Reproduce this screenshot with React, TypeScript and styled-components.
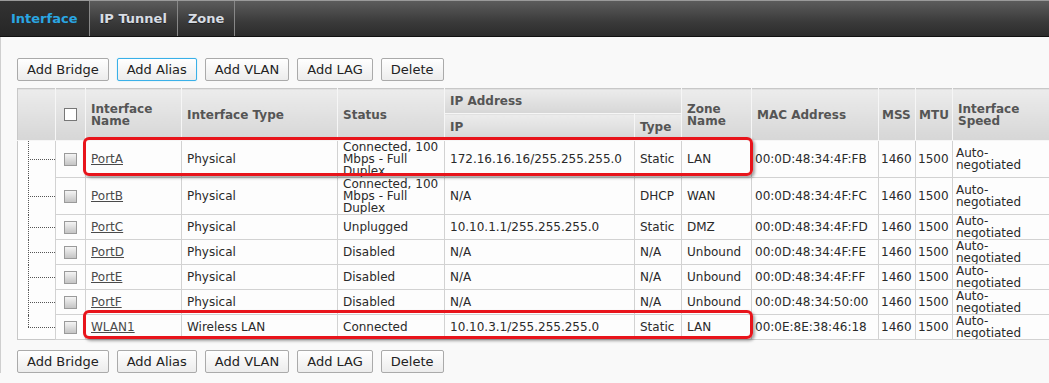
import React from "react";
import styled, { createGlobalStyle } from "styled-components";

const GlobalStyle = createGlobalStyle`
  html, body {
    margin: 0;
    padding: 0;
    background: #f9f9f9;
    font-family: "DejaVu Sans", Verdana, sans-serif;
  }
`;

const Page = styled.div`
  width: 1049px;
  height: 383px;
  overflow: hidden;
  background: #f9f9f9;
`;

const TabBar = styled.div`
  display: flex;
  height: 35px;
  background: linear-gradient(#5c5c5c, #3a3a3a 60%, #2c2c2c);
  border-top: 1px solid #9a9a9a;
  border-bottom: 1px solid #111;
`;

const Tab = styled.div<{ $active?: boolean }>`
  display: flex;
  align-items: center;
  padding: 0 ${(p) => (p.$active ? "11px" : "10px")};
  font-size: 13px;
  font-weight: bold;
  color: ${(p) => (p.$active ? "#2aa6e2" : "#d8dde4")};
  background: ${(p) => (p.$active ? "linear-gradient(#333, #262626)" : "transparent")};
  border-right: 1px solid #888;
  text-shadow: ${(p) => (p.$active ? "none" : "0 1px 0 #222")};
`;

const Content = styled.div`
  border-left: 1px solid #cfcfcf;
  padding: 21px 0 0 16px;
`;

const Toolbar = styled.div`
  display: flex;
  gap: 8px;
  margin-bottom: 7px;
`;

const BottomBar = styled(Toolbar)`
  margin-top: 10px;
  margin-bottom: 0;
`;

const Button = styled.button<{ $focused?: boolean }>`
  height: 23px;
  padding: 0 9px;
  font-family: "DejaVu Sans", Verdana, sans-serif;
  font-size: 13px;
  color: #222;
  background: linear-gradient(#ffffff, #ececec);
  border: 1px solid ${(p) => (p.$focused ? "#3ab0e8" : "#aaaaaa")};
  border-radius: 2px;
  box-shadow: ${(p) => (p.$focused ? "0 0 1px #7fd0f5" : "none")};
  cursor: pointer;
`;

const TableWrap = styled.div`
  position: relative;
  width: 1032px;
`;

const Table = styled.table`
  width: 1032px;
  table-layout: fixed;
  border-collapse: collapse;
  font-size: 12px;
  line-height: 12px;
  color: #2a2a2a;
  border: 1px solid #c8c8c8;
`;

const Th = styled.th<{ $h?: number }>`
  height: ${(p) => p.$h ?? 24}px;
  padding: 0 5px;
  text-align: left;
  font-weight: bold;
  color: #555;
  background: linear-gradient(#ececec, #d6d6d6);
  border-right: 1px solid #f6f6f6;
  border-bottom: 1px solid #f6f6f6;
  vertical-align: middle;
  overflow: hidden;
`;

const Td = styled.td<{ $nowrap?: boolean; $pad?: number }>`
  padding: 0 ${(p) => p.$pad ?? 5}px;
  border: 1px solid #d2d2d2;
  background: #fdfdfd;
  vertical-align: middle;
  white-space: ${(p) => (p.$nowrap ? "nowrap" : "normal")};
  overflow: hidden;
`;

const TreeCell = styled.td<{ $last?: boolean }>`
  position: relative;
  padding: 0;
  background: #fdfdfd;
  border: none;
  &::before {
    content: "";
    position: absolute;
    left: 10px;
    top: 0;
    height: ${(p) => (p.$last ? "50%" : "100%")};
    border-left: 1px dotted #555;
  }
  &::after {
    content: "";
    position: absolute;
    left: 10px;
    right: 0;
    top: 50%;
    border-top: 1px dotted #555;
  }
`;

const Check = styled.span<{ $header?: boolean }>`
  display: block;
  width: 13px;
  height: 13px;
  margin: 0 auto;
  box-sizing: border-box;
  border: 1px solid ${(p) => (p.$header ? "#777" : "#9a9a9a")};
  background: ${(p) =>
    p.$header ? "#fff" : "linear-gradient(#f4f4f4, #c4c4c4)"};
`;

const PortLink = styled.a`
  color: #4a4a4a;
  text-decoration: underline;
`;

const Highlight = styled.div<{ $top: number; $height: number }>`
  position: absolute;
  left: 66px;
  width: 670px;
  top: ${(p) => p.$top}px;
  height: ${(p) => p.$height}px;
  box-sizing: border-box;
  border: 3px solid #e8141b;
  border-radius: 6px;
  box-shadow: 2px 2px 3px rgba(0, 0, 0, 0.35);
  pointer-events: none;
`;

interface IPort {
  name: string;
  type: string;
  status: string;
  ip: string;
  ipType: string;
  zone: string;
  mac: string;
  height: number;
}

const ports: IPort[] = [
  { name: "PortA", type: "Physical", status: "Connected, 100 Mbps - Full Duplex", ip: "172.16.16.16/255.255.255.0", ipType: "Static", zone: "LAN", mac: "00:0D:48:34:4F:FB", height: 35 },
  { name: "PortB", type: "Physical", status: "Connected, 100 Mbps - Full Duplex", ip: "N/A", ipType: "DHCP", zone: "WAN", mac: "00:0D:48:34:4F:FC", height: 36 },
  { name: "PortC", type: "Physical", status: "Unplugged", ip: "10.10.1.1/255.255.255.0", ipType: "Static", zone: "DMZ", mac: "00:0D:48:34:4F:FD", height: 24 },
  { name: "PortD", type: "Physical", status: "Disabled", ip: "N/A", ipType: "N/A", zone: "Unbound", mac: "00:0D:48:34:4F:FE", height: 24 },
  { name: "PortE", type: "Physical", status: "Disabled", ip: "N/A", ipType: "N/A", zone: "Unbound", mac: "00:0D:48:34:4F:FF", height: 24 },
  { name: "PortF", type: "Physical", status: "Disabled", ip: "N/A", ipType: "N/A", zone: "Unbound", mac: "00:0D:48:34:50:00", height: 24 },
  { name: "WLAN1", type: "Wireless LAN", status: "Connected", ip: "10.10.3.1/255.255.255.0", ipType: "Static", zone: "LAN", mac: "00:0E:8E:38:46:18", height: 24 },
];

const colWidths = [38, 30, 96, 156, 107, 190, 47, 70, 127, 37, 37, 97];

const Buttons = ({ focus }: { focus?: boolean }) => (
  <>
    <Button>Add Bridge</Button>
    <Button $focused={focus}>Add Alias</Button>
    <Button>Add VLAN</Button>
    <Button>Add LAG</Button>
    <Button>Delete</Button>
  </>
);

const App = () => {
  return (
    <Page>
      <GlobalStyle />
      <TabBar>
        <Tab $active>Interface</Tab>
        <Tab>IP Tunnel</Tab>
        <Tab>Zone</Tab>
      </TabBar>
      <Content>
        <Toolbar>
          <Buttons focus />
        </Toolbar>
        <TableWrap>
          <Table>
            <colgroup>
              {colWidths.map((w, i) => (
                <col key={i} style={{ width: w }} />
              ))}
            </colgroup>
            <thead>
              <tr>
                <Th rowSpan={2} />
                <Th rowSpan={2}>
                  <Check $header />
                </Th>
                <Th rowSpan={2}>Interface Name</Th>
                <Th rowSpan={2}>Interface Type</Th>
                <Th rowSpan={2}>Status</Th>
                <Th colSpan={2}>IP Address</Th>
                <Th rowSpan={2}>Zone Name</Th>
                <Th rowSpan={2}>MAC Address</Th>
                <Th rowSpan={2} style={{ padding: "0 3px" }}>MSS</Th>
                <Th rowSpan={2} style={{ padding: "0 3px" }}>MTU</Th>
                <Th rowSpan={2}>Interface Speed</Th>
              </tr>
              <tr>
                <Th $h={26}>IP</Th>
                <Th $h={26}>Type</Th>
              </tr>
            </thead>
            <tbody>
              {ports.map((p, i) => (
                <tr key={p.name} style={{ height: p.height }}>
                  <TreeCell $last={i === ports.length - 1} />
                  <Td>
                    <Check />
                  </Td>
                  <Td>
                    <PortLink href="#">{p.name}</PortLink>
                  </Td>
                  <Td>{p.type}</Td>
                  <Td>{p.status}</Td>
                  <Td $nowrap>{p.ip}</Td>
                  <Td $nowrap>{p.ipType}</Td>
                  <Td $nowrap>{p.zone}</Td>
                  <Td $nowrap $pad={3}>{p.mac}</Td>
                  <Td $pad={2}>1460</Td>
                  <Td $pad={2}>1500</Td>
                  <Td $pad={3}>Auto-negotiated</Td>
                </tr>
              ))}
            </tbody>
          </Table>
          <Highlight $top={49} $height={39} />
          <Highlight $top={222} $height={29} />
        </TableWrap>
        <BottomBar>
          <Buttons />
        </BottomBar>
      </Content>
    </Page>
  );
};

export default App;
